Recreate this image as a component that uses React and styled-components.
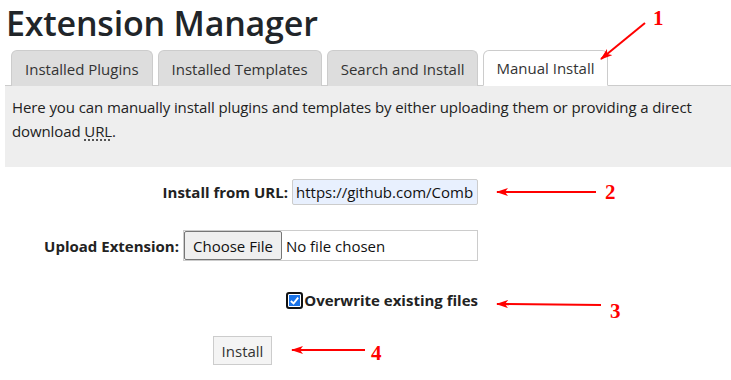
import React from 'react';
import styled, { createGlobalStyle } from 'styled-components';

const GlobalStyle = createGlobalStyle`
    body {
        margin: 0;
        background: #fff;
        font-family: "Open Sans", "Noto Sans", sans-serif;
        color: #212529;
    }
`;

const tabs = ['Installed Plugins', 'Installed Templates', 'Search and Install', 'Manual Install'];

const arrows = [
    { label: '1', x1: 645, y1: 23, x2: 601, y2: 59, nx: 653, ny: 25 },
    { label: '2', x1: 596, y1: 192, x2: 497, y2: 192, nx: 605, ny: 199 },
    { label: '3', x1: 601, y1: 305, x2: 497, y2: 304, nx: 610, ny: 318 },
    { label: '4', x1: 365, y1: 350, x2: 292, y2: 350, nx: 371, ny: 360 },
];

export default function App() {
    return (
        <Page>
            <GlobalStyle />
            <Title>Extension Manager</Title>
            <TabBar>
                {tabs.map((t, i) => (
                    <Tab key={t} active={i === 3}>{t}</Tab>
                ))}
            </TabBar>
            <Panel>
                Here you can manually install plugins and templates by either uploading them or providing a direct download <Abbr>URL</Abbr>.
            </Panel>
            <Form>
                <Row>
                    <Label>Install from URL:</Label>
                    <UrlInput>https://github.com/Comb</UrlInput>
                </Row>
                <Row tall>
                    <Label>Upload Extension:</Label>
                    <FileInput>
                        <FileButton>Choose File</FileButton>
                        <FileName>No file chosen</FileName>
                    </FileInput>
                </Row>
                <Row check>
                    <CheckBox>
                        <svg width="11" height="11" viewBox="0 0 12 12">
                            <path d="M2 6.5 L5 9.2 L10 2.8" fill="none" stroke="#fff" strokeWidth="2" />
                        </svg>
                    </CheckBox>
                    <CheckLabel>Overwrite existing files</CheckLabel>
                </Row>
                <ButtonRow>
                    <InstallButton>Install</InstallButton>
                </ButtonRow>
            </Form>
            <Overlay width="731" height="380">
                <defs>
                    <marker id="head" markerWidth="12" markerHeight="8" refX="11" refY="4" orient="auto" markerUnits="userSpaceOnUse">
                        <path d="M0 0 L12 4 L0 8 L3 4 z" fill="#f00" />
                    </marker>
                </defs>
                {arrows.map((a) => (
                    <g key={a.label}>
                        <line x1={a.x1} y1={a.y1} x2={a.x2} y2={a.y2} stroke="#f00" strokeWidth="2" markerEnd="url(#head)" />
                        <text x={a.nx} y={a.ny} fill="#f00" fontFamily="'Liberation Serif', serif" fontWeight="bold" fontSize="21">{a.label}</text>
                    </g>
                ))}
            </Overlay>
        </Page>
    );
}

const Page = styled.div`
    position: relative;
    width: 731px;
    height: 380px;
    padding-left: 5px;
    box-sizing: border-box;
    overflow: hidden;
`;

const Title = styled.h1`
    margin: 0;
    padding: 1px 0 0 1px;
    font-size: 34px;
    line-height: 44px;
    font-weight: 600;
    letter-spacing: -0.2px;
    height: 50px;
    box-sizing: border-box;
`;

const TabBar = styled.div`
    display: flex;
    gap: 5px;
    padding-left: 6px;
    height: 36px;
    box-sizing: border-box;
    border-bottom: 1px solid #ccc;
`;

const Tab = styled.div`
    height: 36px;
    box-sizing: border-box;
    padding: 0 ${({ active }) => (active ? '12px' : '13px')};
    display: flex;
    align-items: center;
    font-size: 15px;
    color: #333;
    background: ${({ active }) => (active ? '#fff' : '#ddd')};
    border: 1px solid #ccc;
    border-bottom: ${({ active }) => (active ? '1px solid #fff' : 'none')};
    border-radius: 6px 6px 0 0;
    margin-bottom: ${({ active }) => (active ? '-1px' : '0')};
    position: relative;
    z-index: 1;
`;

const Panel = styled.div`
    background: #eee;
    height: 81px;
    box-sizing: border-box;
    padding: 9px 8px 0 7px;
    font-size: 15px;
    line-height: 24px;
    color: #222;
    letter-spacing: -0.1px;
`;

const Abbr = styled.span`
    text-decoration: underline dotted;
    text-underline-offset: 3px;
`;

const Form = styled.div`
    width: 473px;
    padding-top: 12px;
`;

const Row = styled.div`
    display: flex;
    justify-content: flex-end;
    align-items: center;
    gap: 4px;
    height: ${({ tall, check }) => (tall ? '31px' : check ? '18px' : '26px')};
    margin-bottom: ${({ tall, check }) => (tall ? '30px' : check ? '27px' : '25px')};
`;

const Label = styled.label`
    font-weight: 700;
    font-size: 15px;
    color: #222;
`;

const UrlInput = styled.div`
    width: 186px;
    height: 26px;
    box-sizing: border-box;
    background: #e8f0fe;
    border: 1px solid #ccc;
    border-radius: 2px;
    font-size: 15px;
    line-height: 24px;
    padding-left: 3px;
    white-space: nowrap;
    overflow: hidden;
    color: #111;
`;

const FileInput = styled.div`
    width: 295px;
    height: 31px;
    box-sizing: border-box;
    border: 1px solid #ccc;
    display: flex;
    align-items: stretch;
    font-size: 15px;
`;

const FileButton = styled.div`
    background: #efefef;
    border: 1px solid #767676;
    border-radius: 2px;
    padding: 0 8px;
    display: flex;
    align-items: center;
    color: #111;
`;

const FileName = styled.div`
    display: flex;
    align-items: center;
    padding-left: 4px;
    color: #111;
`;

const CheckBox = styled.div`
    width: 17px;
    height: 17px;
    box-sizing: border-box;
    border: 2px solid #111;
    border-radius: 3px;
    background: #1a73e8;
    box-shadow: inset 0 0 0 1px #fff;
    display: flex;
    align-items: center;
    justify-content: center;
    margin-right: -3px;
`;

const CheckLabel = styled.span`
    font-weight: 700;
    font-size: 15px;
    color: #222;
`;

const ButtonRow = styled.div`
    display: flex;
    padding-left: 208px;
`;

const InstallButton = styled.button`
    width: 59px;
    height: 29px;
    font-family: "Open Sans", "Noto Sans", sans-serif;
    font-size: 15px;
    color: #333;
    background: #f4f4f4;
    border: 1px solid #ccc;
    padding: 0;
`;

const Overlay = styled.svg`
    position: absolute;
    top: 0;
    left: 0;
    z-index: 2;
    pointer-events: none;
`;
